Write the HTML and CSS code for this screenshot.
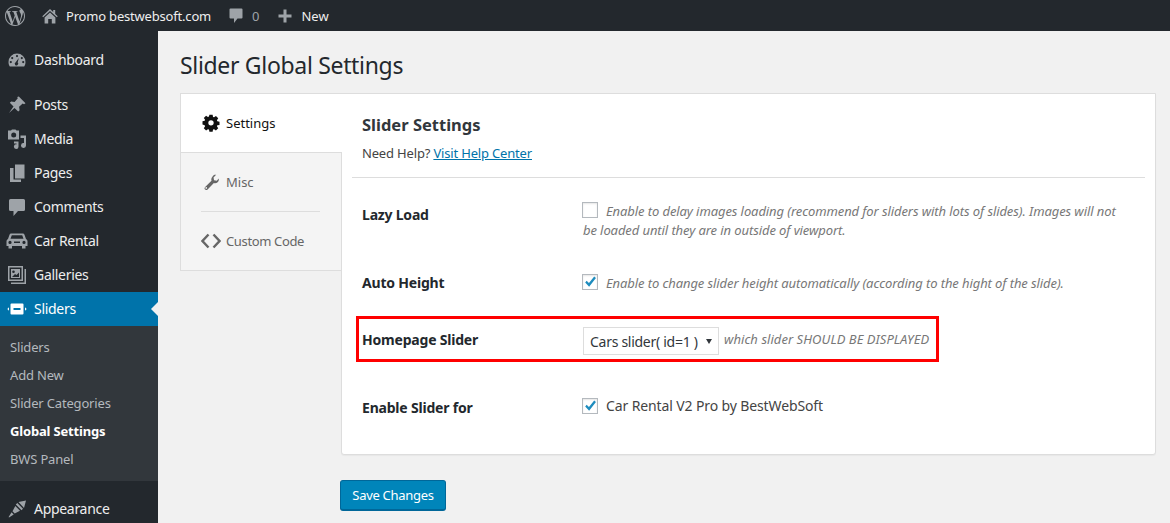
FILE: index.html
```html
<!DOCTYPE html>
<html lang="en">
<head>
<meta charset="utf-8">
<title>Slider Global Settings</title>
<link rel="stylesheet" href="styles.css">
</head>
<body>
<header class="topbar">
  <svg class="wp" viewBox="0 0 24 24"><path d="M21.469 6.825c.84 1.537 1.318 3.3 1.318 5.175 0 3.979-2.156 7.456-5.363 9.325l3.295-9.527c.615-1.54.82-2.771.82-3.864 0-.405-.026-.78-.07-1.11m-7.981.105c.647-.03 1.232-.105 1.232-.105.582-.075.514-.93-.067-.899 0 0-1.755.135-2.88.135-1.064 0-2.85-.15-2.85-.15-.585-.03-.661.855-.075.885 0 0 .54.061 1.125.09l1.68 4.605-2.37 7.08L5.354 6.9c.649-.03 1.234-.1 1.234-.1.585-.075.516-.93-.065-.896 0 0-1.746.138-2.874.138-.2 0-.438-.008-.69-.015C4.911 3.15 8.235 1.215 12 1.215c2.809 0 5.365 1.072 7.286 2.833-.046-.003-.091-.009-.141-.009-1.06 0-1.812.923-1.812 1.914 0 .89.513 1.643 1.06 2.531.411.72.89 1.643.89 2.977 0 .915-.354 1.994-.821 3.479l-1.075 3.585-3.9-11.61.001.014zM12 22.784c-1.059 0-2.081-.153-3.048-.437l3.237-9.406 3.315 9.087c.024.053.05.101.078.149-1.12.393-2.325.609-3.582.609M1.211 12c0-1.564.336-3.05.935-4.39L7.29 21.709C3.694 19.96 1.212 16.271 1.211 12M12 0C5.385 0 0 5.385 0 12s5.385 12 12 12 12-5.385 12-12S18.615 0 12 0"/></svg>
  <svg class="bar-home" viewBox="0 0 16 16"><path d="M8 1 0.300 8.200l.8 1L8 3l6.900 6.200.8-1-2.500-2.300V2h-2v2zM2.600 9.500 8 4.500l5.400 5V15.500H9.800v-4.500H6.200v4.500H2.600z"/></svg>
  <span class="bar-site">Promo bestwebsoft.com</span>
  <svg class="bar-bubble" viewBox="0 0 14 16"><path d="M1.500 .5h11A1 1 0 0 1 13.500 1.500v8a1 1 0 0 1-1 1H8.500L5 15V10.500H1.500a1 1 0 0 1-1-1v-8a1 1 0 0 1 1-1z"/></svg>
  <span class="bar-count">0</span>
  <svg class="bar-plus" viewBox="0 0 14 14"><path d="M5.500 0.500h3v5h5v3h-5v5h-3v-5h-5v-3h5z"/></svg>
  <span class="bar-new">New</span>
</header>
<div class="layout">
  <nav class="sidebar">
    <a class="item dash"><svg class="ico" viewBox="0 0 20 20"><path d="M10 3.500a8.500 8.500 0 0 0-8.500 8.500c0 1.700.5 3.200 1.300 4.500h14.400c.8-1.300 1.300-2.800 1.300-4.500A8.500 8.500 0 0 0 10 3.500zM10 5a1.100 1.100 0 1 1 0 2.200A1.100 1.100 0 0 1 10 5zM5.200 7a1.100 1.100 0 1 1 0 2.200 1.100 1.100 0 0 1 0-2.200zM14.800 7a1.100 1.100 0 1 1 0 2.200 1.100 1.100 0 0 1 0-2.200zM3.800 11a1.100 1.100 0 1 1 0 2.200 1.100 1.100 0 0 1 0-2.200zM16.200 11a1.100 1.100 0 1 1 0 2.200 1.100 1.100 0 0 1 0-2.200zM11.800 8 10.700 12.500a1.700 1.700 0 1 1-2-.3z" fill-rule="evenodd"/></svg>Dashboard</a>
    <a class="item posts"><svg class="ico" viewBox="0 0 20 20"><path d="M11.800 1.500 18.500 8.200l-1.500 1-1.300-.6-3.600 3.200.5 3.400-1.400 1.400-3.700-3.700L2 18l4.500-6.500-3.700-3.700 1.400-1.400 3.400.5 3.200-3.600-.6-1.300z"/></svg>Posts</a>
    <a class="item"><svg class="ico" viewBox="0 0 20 20"><path d="M1 1.500h3l1-1h3.500l1 1h2.500v9H1zM6.700 3.500a2.500 2.500 0 1 0 0 5 2.500 2.500 0 0 0 0-5zM13.500 6.500h5.500v10a2.500 2.500 0 1 1-2-2.400V9h-3.500zM7 12.500h4.500v5.200a2.300 2.300 0 1 1-2-2.300v-1H7z" fill-rule="evenodd"/></svg>Media</a>
    <a class="item"><svg class="ico" viewBox="0 0 20 20"><path d="M8 1.500h9.500v14H8zM3 5h3.500v11.500H14V19H3z"/></svg>Pages</a>
    <a class="item"><svg class="ico" viewBox="0 0 20 20"><path d="M3.500 2h13A1.500 1.500 0 0 1 18 3.500v9a1.500 1.500 0 0 1-1.500 1.500H11l-4.500 5v-5h-3A1.500 1.500 0 0 1 2 12.500v-9A1.500 1.500 0 0 1 3.500 2z"/></svg>Comments</a>
    <a class="item"><svg class="ico car" viewBox="0 0 22 18"><path d="M5.500 1.500h11c1 0 1.700.5 2 1.300L20 7c1 .6 1.500 1.500 1.500 2.500V14h-2v2.500h-3.500V14H6v2.500H2.500V14H.5V9.500C.5 8.500 1 7.600 2 7l1.500-4.200c.3-.8 1-1.300 2-1.300zM5.800 3.300 4.500 6.800h13l-1.300-3.500zM4 8.800a1.600 1.600 0 1 0 0 3.200 1.600 1.600 0 0 0 0-3.200zM18 8.800a1.600 1.600 0 1 0 0 3.200 1.600 1.600 0 0 0 0-3.200zM8 9.500v1.500h6V9.500z" fill-rule="evenodd"/></svg>Car Rental</a>
    <a class="item"><svg class="ico" viewBox="0 0 20 20"><path d="M1 1h15v15H1zM2.500 2.500v12h12v-12zM4 4h9v9H4zM6.500 5.500a1.300 1.300 0 1 0 0 2.600 1.300 1.300 0 0 0 0-2.600zM5 12h7V7.500L9.500 10 8 9zM17.500 4H19v15H4v-1.500h13.500z" fill-rule="evenodd"/></svg>Galleries</a>
    <a class="item current"><svg class="ico slider-ico" viewBox="0 0 20 14"><path d="M4.500 1.500h11a1 1 0 0 1 1 1v9a1 1 0 0 1-1 1h-11a1 1 0 0 1-1-1v-9a1 1 0 0 1 1-1zM6.500 6v2h7V6zM2 5.300v3.400L.3 7zM18 5.300 19.700 7 18 8.700z" fill-rule="evenodd"/></svg>Sliders</a>
    <div class="submenu">
      <a class="sub">Sliders</a>
      <a class="sub">Add New</a>
      <a class="sub">Slider Categories</a>
      <a class="sub active">Global Settings</a>
      <a class="sub">BWS Panel</a>
    </div>
    <a class="item appear"><svg class="ico" viewBox="0 0 20 20"><path d="M11.500 3 19 1.500 17 9zM10.300 4 16 9.700l-1.500 1.500-5.700-5.700zM8.300 7l4.700 4.700-5.300 2.800-2.200-2.200zM4.600 13.300l2.100 2.100-4.700 3-.4-.4z"/></svg>Appearance</a>
  </nav>
  <main class="main">
    <h1 class="title">Slider Global Settings</h1>
    <div class="panel">
      <aside class="tabs">
        <div class="tab tab-on"><svg class="tab-ico" viewBox="0 0 20 20"><path d="M8 .5h4l.5 2.700 1.300.5 2.300-1.600 2.800 2.800-1.600 2.300.5 1.300 2.700.5v4l-2.700.5-.5 1.300 1.600 2.300-2.800 2.800-2.300-1.600-1.300.5-.5 2.700H8l-.5-2.700-1.300-.5-2.300 1.600-2.800-2.800 1.600-2.300-.5-1.300L-.5 12.500v-4L2.200 8l.5-1.300L1.100 4.400l2.800-2.800 2.300 1.600 1.300-.5zM10 7.200a3.300 3.300 0 1 0 0 6.600 3.300 3.300 0 0 0 0-6.600z" fill-rule="evenodd" transform="translate(1 .4) scale(.9)"/></svg>Settings</div>
        <div class="tab-rest">
          <div class="tab tab-misc"><svg class="tab-ico" viewBox="0 0 20 20"><path d="M18.500 5.200c.4 1.800-.1 3.400-1.300 4.500-1.200 1.100-2.900 1.400-4.400.9l-7.400 7.500c-.9.900-2.200.9-3 .1s-.8-2.100.1-3l7.500-7.400c-.5-1.600-.2-3.300.9-4.400C12.100 1.100 13.800.6 15.500 1l-3.100 3.100.6 3.200 3.200.6zM3.800 15.400a1 1 0 1 0 0 2 1 1 0 0 0 0-2z" fill-rule="evenodd"/></svg>Misc</div>
          <div class="tab-line"></div>
          <div class="tab tab-code"><svg class="tab-ico code-ico" viewBox="0 0 20 16"><path d="M7.500 1.500 1.500 8l6 6.500M12.500 1.500l6 6.500-6 6.500"/></svg>Custom Code</div>
        </div>
      </aside>
      <section class="content">
        <div class="head">
          <h2 class="sub-title">Slider Settings</h2>
          <p class="help">Need Help? <a class="help-link">Visit Help Center</a></p>
        </div>
        <div class="row row-lazy">
          <div class="label">Lazy Load</div>
          <div class="field"><span class="check"></span><em>Enable to delay images loading (recommend for sliders with lots of slides). Images will not be loaded until they are in outside of viewport.</em></div>
        </div>
        <div class="row row-auto">
          <div class="label">Auto Height</div>
          <div class="field"><span class="check"><svg viewBox="0 0 16 16"><path d="M2.500 8.500 4.200 6.600 6.800 9 12.800 1.800 14.800 3.400 7 13.500z"/></svg></span><em>Enable to change slider height automatically (according to the hight of the slide).</em></div>
        </div>
        <div class="row row-home">
          <div class="label">Homepage Slider</div>
          <div class="field"><span class="select">Cars slider( id=1 )<i class="arrow"></i></span><em class="hint">which slider SHOULD BE DISPLAYED</em></div>
        </div>
        <div class="row row-enable">
          <div class="label">Enable Slider for</div>
          <div class="field"><span class="check"><svg viewBox="0 0 16 16"><path d="M2.500 8.500 4.200 6.600 6.800 9 12.800 1.800 14.800 3.400 7 13.500z"/></svg></span><span class="plain">Car Rental V2 Pro by BestWebSoft</span></div>
        </div>
      </section>
    </div>
    <button class="save" type="button">Save Changes</button>
  </main>
</div>
</body>
</html>
```
FILE: styles.css
```css
* { box-sizing: border-box; }
html, body { margin: 0; height: 523px; overflow: hidden; }
body { background: #f1f1f1; font-family: "Noto Sans", "Open Sans", sans-serif; font-size: 13px; color: #444; }
.topbar { height: 31px; background: #23282d; display: flex; align-items: center; color: #eee; }
.topbar svg { fill: #9ea3a8; flex: none; }
.wp { width: 20px; height: 20px; margin-left: 5px; }
.bar-home { width: 16px; height: 16px; margin-left: 17px; }
.bar-site { margin-left: 8px; font-size: 13px; letter-spacing: -.19px; }
.bar-bubble { width: 14px; height: 16px; margin-left: 18px; }
.bar-count { margin-left: 9px; color: #9ea3a8; font-size: 13px; }
.bar-plus { width: 14px; height: 14px; margin-left: 19px; }
.bar-new { margin-left: 9px; }
.layout { display: flex; height: 492px; }
.sidebar { width: 158px; flex: none; background: #23282d; color: #eee; padding-top: 12px; overflow: hidden; }
.item { display: flex; align-items: center; height: 34px; font-size: 14px; letter-spacing: -.3px; padding: 0 0 2px 34px; position: relative; }
.ico { position: absolute; left: 7px; top: 7px; width: 20px; height: 20px; fill: #9ea3a8; }
.ico.car { left: 6px; width: 22px; height: 18px; top: 8px; }
.dash { margin-bottom: 11px; }
.current { background: #0073aa; color: #fff; }
.current::after { content: ""; position: absolute; right: 0; top: 10px; border: 7px solid transparent; border-right-color: #f1f1f1; border-left-width: 0; }
.current .ico { fill: #fff; }
.slider-ico { top: 10px; height: 14px; }
.submenu { background: #32373c; padding: 8px 0 7px; }
.sub { display: block; height: 28px; line-height: 26px; padding-left: 10px; font-size: 13px; letter-spacing: -.17px; color: #b4b9be; }
.sub.active { color: #fff; font-weight: 700; }
.appear { margin-top: 11px; }
.main { flex: 1; padding: 0 14px 0 22px; }
.title { margin: 0; font-size: 23px; font-weight: 400; letter-spacing: -.32px; color: #23282d; line-height: 30px; padding-top: 19px; }
.panel { display: flex; margin-top: 13px; height: 362px; }
.tabs { width: 162px; flex: none; height: 178px; margin-right: -1px; position: relative; z-index: 1; border: 1px solid #ddd; border-right: 0; background: #fff; display: flex; flex-direction: column; }
.tab { display: flex; align-items: center; font-size: 13px; color: #666; position: relative; }
.tab-on { height: 58px; color: #111; padding-left: 45px; }
.tab-rest { flex: 1; background: #f4f4f4; border-top: 1px solid #ddd; border-right: 1px solid #ddd; display: flex; flex-direction: column; padding-left: 20px; }
.tab-misc { height: 58px; padding-left: 25px; }
.tab-code { height: 58px; padding-left: 25px; letter-spacing: -.36px; }
.tab-line { width: 119px; height: 1px; background: #ddd; }
.tab-ico { position: absolute; left: 21px; top: 20px; width: 18px; height: 18px; fill: #111; }
.tab-misc .tab-ico { left: 2px; top: 21px; width: 17px; height: 17px; fill: #666; }
.tab-code .tab-ico { left: 0; top: 21px; width: 20px; height: 16px; fill: none; stroke: #666; stroke-width: 2.400; }
.content { flex: 1; height: 362px; background: #fff; border: 1px solid #ddd; border-radius: 0 0 3px 3px; padding: 0 10px; box-shadow: 0 1px 1px rgba(0,0,0,.04); }
.head { height: 84px; border-bottom: 1px solid #ddd; padding: 21px 0 0 10px; }
.sub-title { margin: 0; font-size: 16.500px; font-weight: 700; color: #32373c; line-height: 20px; }
.help { margin: 9px 0 0; font-size: 13px; line-height: 18px; letter-spacing: -.17px; }
.help-link { color: #0073aa; text-decoration: underline; }
.row { display: flex; padding-left: 10px; }
.label { width: 221px; flex: none; font-size: 14px; font-weight: 700; letter-spacing: -.2px; color: #23282d; }
.field { flex: 1; font-size: 13px; line-height: 19px; letter-spacing: -.09px; color: #777; }
.row-lazy { margin-top: 24px; height: 53px; padding-right: 16px; }
.row-lazy .label { margin-top: 3px; }
.row-auto { margin-top: 19px; height: 24px; }
.row-auto .label { margin-top: -1px; }
.row-home { width: 583px; height: 46px; margin: 18px 0 0 4px; padding-left: 3px; border: 3px solid #f00; align-items: center; }
.row-home .field { padding-top: 4px; }
.row-enable { margin-top: 36px; }
.row-enable .field { margin-top: -2px; }
.check { display: inline-block; width: 16px; height: 16px; border: 1px solid #b4b9be; background: #fff; vertical-align: -2px; margin: 0 8px 0 -1px; box-shadow: inset 0 1px 2px rgba(0,0,0,.1); }
.row-enable .check { vertical-align: -3px; }
.check svg { display: block; width: 14px; height: 14px; fill: #1e8cbe; }
.plain { font-size: 14px; letter-spacing: -.12px; color: #444; }
.select { display: inline-flex; align-items: center; width: 136px; height: 28px; padding-left: 6px; border: 1px solid #ddd; background: #fff; font-size: 14px; letter-spacing: -.28px; color: #32373c; position: relative; vertical-align: middle; }
.arrow { position: absolute; right: 6px; top: 11px; border: 3.500px solid transparent; border-top: 5px solid #32373c; border-bottom: 0; }
.hint { margin-left: 5px; font-size: 13px; letter-spacing: .05px; }
.save { display: block; margin: 25px 0 0 160px; width: 106px; height: 31px; background: #0085ba; border: 1px solid #006799; border-bottom-width: 2px; border-radius: 3px; color: #fff; font: 13px "Noto Sans", "Open Sans", sans-serif; letter-spacing: -.3px; padding: 0; }
```
